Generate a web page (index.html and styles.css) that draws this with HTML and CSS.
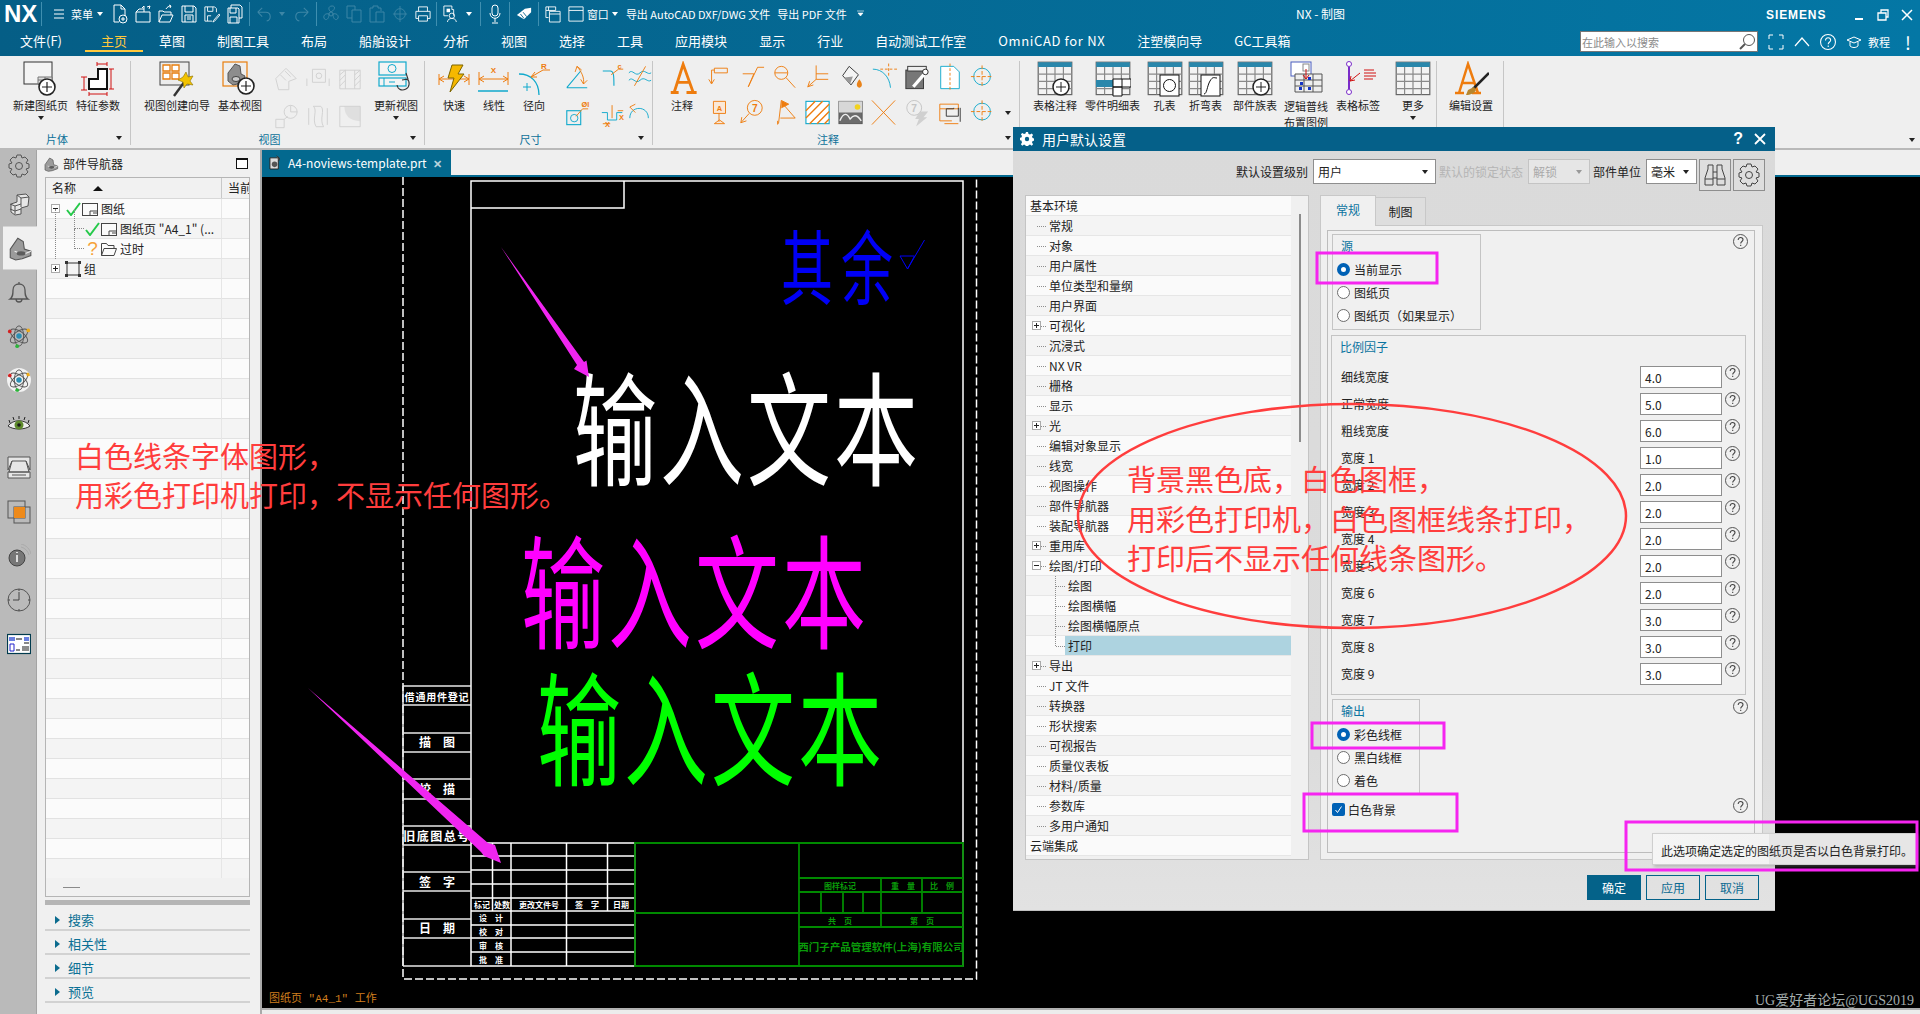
FILE: index.html
```html
<!DOCTYPE html>
<html lang="zh-CN">
<head>
    <meta charset="UTF-8">
    <title>NX - 制图</title>
    <link rel="stylesheet" href="styles.css">
</head>
<body>

<!-- shared icons -->
<svg class="defs" xmlns="http://www.w3.org/2000/svg">
    <symbol id="q-new" viewBox="0 0 16 20"><path d="M2 1h7l4 4v7M9 1v4h4M7 18H2V1" fill="none" stroke="currentColor"/><circle cx="11" cy="15" r="4" fill="none" stroke="currentColor"/><path d="M9 15h4M11 13v4" stroke="currentColor"/></symbol>
    <symbol id="q-box" viewBox="0 0 16 20"><path d="M1 8h14v10H1zM1 8l3-3h5M9 8V2M9 2l-2 2M12 3l3-1-1 3" fill="none" stroke="currentColor"/></symbol>
    <symbol id="q-open" viewBox="0 0 16 20"><path d="M1 18V7h4l1 1h7v3M1 18l3-7h11l-3 7zM8 5c1-2 3-3 5-3M13 2l-2-1M13 2l-1 2" fill="none" stroke="currentColor"/></symbol>
    <symbol id="q-save" viewBox="0 0 16 20"><path d="M1 2h12l2 2v14H1zM4 2v6h8V2M4 18v-7h8v7M6 13h4M6 15h4" fill="none" stroke="currentColor"/></symbol>
    <symbol id="q-saveas" viewBox="0 0 18 20"><path d="M1 2h11l2 2v4M1 2v16h8M4 2v5h6V2M4 18v-6h4M11 17l6-7 1 1-6 7-2 1z" fill="none" stroke="currentColor"/></symbol>
    <symbol id="q-saveall" viewBox="0 0 16 20"><path d="M4 4V1h9l2 2v11h-3M1 4h10l1 1v14H1zM3 4v5h6V4M3 19v-6h7v6" fill="none" stroke="currentColor"/></symbol>
    <symbol id="q-undo" viewBox="0 0 18 20"><path d="M2 8l5-5M2 8l5 5M2 8h9c4 0 5 3 5 5s-1 4-4 5" fill="none" stroke="currentColor" stroke-width="1.2"/></symbol>
    <symbol id="q-fan" viewBox="0 0 16 20"><circle cx="8" cy="10" r="2" fill="none" stroke="currentColor"/><path d="M8 8c-3-2-3-6 1-6s3 4-1 6zM10 10c3-1 6 1 5 4s-5 2-5-4zM6 10c-3-1-6 1-5 4s5 2 5-4z" fill="none" stroke="currentColor"/></symbol>
    <symbol id="q-copy" viewBox="0 0 16 20"><path d="M1 2h8v4h6v12H6v-4H1zM9 6H6v8" fill="none" stroke="currentColor"/></symbol>
    <symbol id="q-paste" viewBox="0 0 16 20"><path d="M1 4h3V2h5v2h3v3M1 4v14h6M7 8h8v10H7z" fill="none" stroke="currentColor"/></symbol>
    <symbol id="q-snap" viewBox="0 0 18 20"><circle cx="9" cy="10" r="6" fill="none" stroke="currentColor"/><path d="M9 1v18M1 10h16" fill="none" stroke="currentColor"/></symbol>
    <symbol id="q-print" viewBox="0 0 18 20"><path d="M4 7V2h10v5M4 15H1V7h16v8h-3M4 12h10v6H4z" fill="none" stroke="currentColor"/></symbol>
    <symbol id="q-view" viewBox="0 0 18 20"><path d="M1 1h9v4h2v7M1 1v11h5" fill="none" stroke="currentColor"/><path d="M4 4h4v4H4z" fill="currentColor"/><circle cx="10" cy="12" r="3" fill="none" stroke="currentColor"/><path d="M5 19c0-3 3-4 5-4s5 1 5 4" fill="none" stroke="currentColor"/></symbol>
    <symbol id="q-mic" viewBox="0 0 12 20"><rect x="3" y="1" width="6" height="11" rx="3" fill="none" stroke="currentColor"/><path d="M1 9c0 7 10 7 10 0M6 14v4M3 19h6" fill="none" stroke="currentColor"/></symbol>
    <symbol id="q-tag" viewBox="0 0 18 20"><path d="M1 11l9-7 7-1v5l-8 8z" fill="currentColor"/><path d="M5 10l4 5M8 8l4 5" stroke="#05618a"/></symbol>
    <symbol id="q-wins" viewBox="0 0 18 20"><path d="M1 2h11v4H1zM1 6v8h3M5 7h12v12H5zM5 10h12M4 2v4" fill="none" stroke="currentColor"/></symbol>
    <symbol id="q-win" viewBox="0 0 18 20"><path d="M1 2h16v16H1zM1 6h16" fill="none" stroke="currentColor"/></symbol>

    <symbol id="i-newsheet" viewBox="0 0 36 36"><rect x="1" y="1" width="28" height="22" fill="#f4f4f4" stroke="#333"/><path d="M15 16h14v7H15zM15 19h14M22 16v7" fill="#ddd" stroke="#777"/><circle cx="24" cy="26" r="8" fill="#fff" stroke="#222" stroke-width="1.6"/><path d="M19 26h10M24 21v10" stroke="#222" stroke-width="1.2"/></symbol>
    <symbol id="i-param" viewBox="0 0 36 36"><path d="M18 8h9v20H9V18h9z" fill="#fff" stroke="#111" stroke-width="2"/><path d="M17 3h10M17 1v4M27 1v4M4 16v13M1 16h6M1 29h6M9 33h18M9 31v4M27 31v4M31 8v20M29 8h5M29 28h5" stroke="#d01010" fill="none"/></symbol>
    <symbol id="i-wizard" viewBox="0 0 36 36"><rect x="1" y="1" width="29" height="23" fill="#ececec" stroke="#444"/><path d="M4 4h7v6H4zM13 4h7v6h-7zM4 12h7v6H4zM13 12h7v6h-7z" fill="#fff" stroke="#e87d0d" stroke-width="1.3"/><path d="M26 20L15 35" stroke="#333" stroke-width="2.4"/><path d="M27 11l2 5 5-1-3 5 3 4-6-1-3 4-1-6-5-2 5-3z" fill="#f2c200" stroke="#8a7000" stroke-width=".6"/></symbol>
    <symbol id="i-base" viewBox="0 0 36 36"><rect x="1" y="1" width="24" height="24" fill="#eee" stroke="#e87d0d" stroke-width="1.2"/><path d="M6 20l0-8 7-9 5 2 1 8 4 2-3 7-9 2z" fill="#8d8d8d" stroke="#555"/><ellipse cx="14" cy="18" rx="4" ry="2.5" fill="#ccc" stroke="#444"/><circle cx="24" cy="25" r="8" fill="#fff" stroke="#222" stroke-width="1.6"/><path d="M19 25h10M24 20v10" stroke="#222" stroke-width="1.2"/></symbol>
    <symbol id="i-update" viewBox="0 0 36 36"><rect x="1" y="1" width="27" height="13" fill="#f4f4f4" stroke="#10a9cc" stroke-width="1.2"/><ellipse cx="14" cy="7.500" rx="4" ry="4" fill="none" stroke="#10a9cc"/><rect x="1" y="17" width="27" height="8" fill="#f4f4f4" stroke="#10a9cc" stroke-width="1.2"/><path d="M6 17v8M11 21h6" stroke="#10a9cc"/><path d="M29 18c3 2 3 8-1 10s-8 1-9-4M28 12l2 6-6 1" fill="none" stroke="#333" stroke-width="1.1"/></symbol>
    <symbol id="i-quick" viewBox="0 0 36 36"><path d="M3 18h30M3 13v11M33 13v11M3 18l5-3M3 18l5 3M33 18l-5-3M33 18l-5 3" stroke="#ee7c0e" fill="none"/><path d="M16 4h11l-5 9h6L14 31l4-14h-6z" fill="#f5b800" stroke="#7c6400"/></symbol>
    <symbol id="i-linear" viewBox="0 0 36 36"><path d="M3 18h29M3 11v13M32 11v13M3 18l5-3M3 18l5 3M32 18l-5-3M32 18l-5 3" stroke="#ee7c0e" fill="none"/><path d="M2 30h30" stroke="#10a9cc" stroke-width="1.5"/></symbol>
    <symbol id="i-radial" viewBox="0 0 36 36"><path d="M3 13c12 0 20 8 20 21" fill="none" stroke="#10a9cc" stroke-width="1.3"/><path d="M7 26h8M11 22v8" stroke="#10a9cc"/><path d="M15 16l12-7h7M15 16l4-5M15 16l6 0" stroke="#ee7c0e" fill="none"/></symbol>

    <symbol id="s-angle" viewBox="0 0 28 30"><path d="M3 26L18 8M3 26h22" stroke="#10a9cc" fill="none" stroke-width="1.2"/><path d="M14 3c5 6 8 12 7 19M14 3l-2 6M14 3l5 4M21 22l-3-5M21 22l4-4" stroke="#ee7c0e" fill="none"/></symbol>
    <symbol id="s-chamfer" viewBox="0 0 28 30"><path d="M3 8h8c4 0 4 6 4 16" stroke="#10a9cc" fill="none" stroke-width="1.2"/><path d="M12 12l8-6h5" stroke="#ee7c0e" fill="none"/></symbol>
    <symbol id="s-dia" viewBox="0 0 28 30"><rect x="3" y="12" width="15" height="15" fill="none" stroke="#10a9cc" stroke-width="1.2"/><circle cx="11" cy="20" r="4" fill="none" stroke="#10a9cc"/><path d="M13 18L20 10h6" stroke="#ee7c0e" fill="none"/></symbol>
    <symbol id="s-pitch" viewBox="0 0 28 30"><path d="M2 14h6v8h10v-8h6" stroke="#10a9cc" fill="none"/><path d="M13 6v14M3 26h8M19 12h6" stroke="#ee7c0e" fill="none"/></symbol>
    <symbol id="s-wave" viewBox="0 0 28 30"><path d="M2 10c4-5 7 5 12 0s8 3 12 0M2 18c4-5 7 5 12 0s8 3 12 0" stroke="#10a9cc" fill="none"/><path d="M20 3L8 24" stroke="#ee7c0e"/></symbol>
    <symbol id="s-arc" viewBox="0 0 28 30"><path d="M3 20c0-14 20-14 20 0" stroke="#10a9cc" fill="none"/><path d="M3 8l6 6M3 8l6-3" stroke="#ee7c0e" fill="none"/></symbol>

    <symbol id="n-text" viewBox="0 0 32 32"><path d="M6 28h7M20 28h9M9 28l8-25 9 25M11 19h11" fill="none" stroke="#ee7c0e" stroke-width="2.5"/></symbol>
    <symbol id="n-leader" viewBox="0 0 28 30"><path d="M9 5h14v5H9zM9 7H6v14M6 22l-3-5M6 22l3-5" fill="none" stroke="#ee7c0e"/></symbol>
    <symbol id="n-rough" viewBox="0 0 28 30"><path d="M4 11h12l-6 14 10-21h7" fill="none" stroke="#ee7c0e"/></symbol>
    <symbol id="n-search" viewBox="0 0 28 30"><circle cx="10" cy="10" r="7" fill="none" stroke="#ee7c0e"/><path d="M3 10h14M15 15l10 11" stroke="#ee7c0e" fill="none"/></symbol>
    <symbol id="n-datum" viewBox="0 0 28 30"><path d="M12 2v15h13M12 11h13M12 17L3 25M3 25l2-6M3 25l6-2" fill="none" stroke="#ee7c0e"/></symbol>
    <symbol id="n-fill" viewBox="0 0 28 30"><path d="M12 3l10 9-8 11-9-10z" fill="#f4f4f4" stroke="#333"/><path d="M7 15l9-1-3 8z" fill="#999"/><path d="M23 17c-5 6-2 9 0 9s5-3 0-9z" fill="#e9831a"/></symbol>
    <symbol id="n-curve" viewBox="0 0 28 30"><path d="M2 6c10 0 18 8 19 20" fill="none" stroke="#10a9cc"/><path d="M10 6h18M19 0v14" stroke="#ee7c0e" stroke-dasharray="3 2" fill="none"/></symbol>
    <symbol id="n-tool" viewBox="0 0 28 30"><rect x="2" y="7" width="19" height="20" fill="#777" stroke="#333"/><rect x="4" y="3" width="20" height="5" fill="#eee" stroke="#333"/><path d="M10 25l13-15" stroke="#fff" stroke-width="3.500"/><circle cx="23" cy="9" r="3" fill="#fff" stroke="#222"/></symbol>
    <symbol id="n-sheet" viewBox="0 0 28 30"><path d="M4 3h14l6 6v18H4z" fill="#fff" stroke="#10a9cc"/><path d="M14 0v30" stroke="#ee7c0e" stroke-dasharray="3 2"/></symbol>
    <symbol id="n-target" viewBox="0 0 28 30"><circle cx="13" cy="14" r="9" fill="none" stroke="#10a9cc"/><path d="M1 14h24M13 2v24" stroke="#ee7c0e" stroke-dasharray="4 2"/></symbol>
    <symbol id="n-label" viewBox="0 0 28 30"><path d="M8 3h13v13H8zM14 16v9M9 27h11l-5.500-4z" fill="#fbe8d6" stroke="#ee7c0e"/></symbol>
    <symbol id="n-seven" viewBox="0 0 28 30"><circle cx="17" cy="10" r="8" fill="none" stroke="#ee7c0e"/><path d="M11 16L2 26M2 26l1-6M2 26l6-2" stroke="#ee7c0e" fill="none"/></symbol>
    <symbol id="n-flag" viewBox="0 0 28 30"><path d="M7 27l3-25 8 4-8 4M6 28l0-4M12 6l13 15H9" fill="none" stroke="#ee7c0e"/><path d="M10 2l8 4-8 4z" fill="#ee7c0e"/></symbol>
    <symbol id="n-hatch" viewBox="0 0 28 30"><rect x="1" y="3" width="25" height="24" fill="#fff" stroke="#10a9cc" stroke-width="1.2"/><path d="M1 13l10-10M1 21L19 3M5 27L26 6M13 27l13-13M21 27l5-5" stroke="#ee7c0e" stroke-width="1.5"/></symbol>
    <symbol id="n-image" viewBox="0 0 28 30"><rect x="1" y="3" width="25" height="24" fill="#6c6c6c" stroke="#555"/><path d="M1 3h25v12H1z" fill="#d7d7d7"/><circle cx="21" cy="9" r="3" fill="#f2d21e"/><path d="M2 24c4-10 8-8 11-2 3-4 7-6 12 2" fill="none" stroke="#eee" stroke-width="1.5"/></symbol>
    <symbol id="n-cross" viewBox="0 0 28 30"><path d="M1 2l25 26M26 2L1 28" stroke="#ee7c0e" fill="none"/></symbol>
    <symbol id="n-sevenoff" viewBox="0 0 28 30"><circle cx="11" cy="10" r="8" fill="none" stroke="#c4c4c4"/><path d="M17 14h9l-5 6h4L13 30l3-8h-4z" fill="#d0d0d0"/></symbol>
    <symbol id="n-part" viewBox="0 0 28 30"><path d="M3 6h20v5H3zM3 11v13h13" fill="none" stroke="#ee7c0e"/><path d="M10 19v-8h8v-1M10 19h13V10M25 10v15" fill="none" stroke="#333"/><path d="M8 27h15" stroke="#ee7c0e"/></symbol>

    <symbol id="t-grid" viewBox="0 0 30 30"><rect x="1" y="1" width="28" height="27" fill="#f3f3f3" stroke="#666"/><path d="M1 1h28v4H1z" fill="#2a87ab"/><path d="M1 11h28M1 17h28M1 23h28M8 5v23M15 5v23M22 5v23" stroke="#8a8a8a"/></symbol>

    <symbol id="exp-plus" viewBox="0 0 9 9"><rect x=".5" y=".5" width="8" height="8" fill="#fff" stroke="#aaa"/><path d="M2 4.500h5M4.500 2v5" stroke="#222"/></symbol>
    <symbol id="exp-minus" viewBox="0 0 9 9"><rect x=".5" y=".5" width="8" height="8" fill="#fff" stroke="#aaa"/><path d="M2 4.500h5" stroke="#222"/></symbol>
    <symbol id="help" viewBox="0 0 15 15"><circle cx="7.500" cy="7.500" r="7" fill="none" stroke="#555"/><path d="M5.200 6c0-3.400 4.800-3 4.800-.2 0 1.700-2.300 1.700-2.300 3.700M7.700 10.800v1.300" fill="none" stroke="#444" stroke-width="1.100"/></symbol>
    <symbol id="check" viewBox="0 0 15 14"><path d="M1 8l4 5 9-12" fill="none" stroke="#25c94a" stroke-width="2"/></symbol>
    <symbol id="sheet" viewBox="0 0 16 14"><rect x=".5" y="1.500" width="15" height="12" fill="#fafafa" stroke="#444"/><path d="M8 9h7.500M8 9v4.500M11 11h4" stroke="#444" fill="none"/></symbol>
    <symbol id="part" viewBox="0 0 24 24"><path d="M3 21l0-8 7-10 5 3 1 7 6 2 0 4-8 3-6 1z" fill="#9b9b9b" stroke="#555"/><path d="M7 15l8 3 7-3" fill="none" stroke="#eee"/><ellipse cx="13" cy="17" rx="4" ry="2" fill="#5c5c5c"/></symbol>
    <symbol id="atom" viewBox="0 0 26 26"><ellipse cx="13" cy="13" rx="11" ry="5" fill="none" stroke="#555" transform="rotate(35 13 13)"/><ellipse cx="13" cy="13" rx="11" ry="5" fill="none" stroke="#555" transform="rotate(-35 13 13)"/><ellipse cx="13" cy="13" rx="5" ry="11" fill="none" stroke="#555"/><circle cx="13" cy="13" r="3" fill="#2c8fb3"/><circle cx="3" cy="8" r="2" fill="#d32020"/><circle cx="23" cy="7" r="2" fill="#eca91a"/><circle cx="11" cy="24" r="2" fill="#2cb53a"/></symbol>
</svg>

<header class="titlebar">
    <span class="nx-logo">NX</span>
    <span class="qat-div"></span>
    <svg class="q hamburger" viewBox="0 0 10 10"><path d="M0 1h10M0 5h10M0 9h10" stroke="currentColor"/></svg>
    <span class="qat-text menu-word">菜单</span><i class="tri white"></i>
    <svg class="q"><use href="#q-new"/></svg>
    <svg class="q"><use href="#q-box"/></svg>
    <svg class="q"><use href="#q-open"/></svg>
    <svg class="q"><use href="#q-save"/></svg>
    <svg class="q"><use href="#q-saveas"/></svg>
    <svg class="q"><use href="#q-saveall"/></svg>
    <span class="qat-div"></span>
    <svg class="q off"><use href="#q-undo"/></svg><i class="tri dim"></i>
    <svg class="q off flip"><use href="#q-undo"/></svg>
    <span class="qat-div"></span>
    <svg class="q off"><use href="#q-fan"/></svg>
    <svg class="q off"><use href="#q-copy"/></svg>
    <svg class="q off"><use href="#q-paste"/></svg>
    <svg class="q off"><use href="#q-snap"/></svg>
    <svg class="q"><use href="#q-print"/></svg>
    <span class="qat-div"></span>
    <svg class="q"><use href="#q-view"/></svg><i class="tri white"></i>
    <span class="qat-div"></span>
    <svg class="q"><use href="#q-mic"/></svg>
    <span class="qat-div"></span>
    <svg class="q"><use href="#q-tag"/></svg>
    <span class="qat-div"></span>
    <svg class="q"><use href="#q-wins"/></svg>
    <svg class="q last-q"><use href="#q-win"/></svg>
    <span class="qat-text">窗口</span><i class="tri white win-tri"></i>
    <span class="qat-text export">导出 AutoCAD DXF/DWG 文件</span>
    <span class="qat-text export">导出 PDF 文件</span>
    <svg class="tri-more" viewBox="0 0 8 8"><path d="M0 1h7M1 3h5l-2.500 3z" fill="#fff" stroke="#fff" stroke-width=".6"/></svg>

    <span class="window-title">NX - 制图</span>
    <span class="siemens">SIEMENS</span>
    <div class="win-btns">
        <svg viewBox="0 0 12 12"><path d="M2 10h8" stroke="#fff" stroke-width="2"/></svg>
        <svg viewBox="0 0 12 12"><path d="M1 4h8v7H1zM4 4V1h7v7H9" fill="none" stroke="#fff" stroke-width="1.300"/></svg>
        <svg viewBox="0 0 12 12"><path d="M1 1l10 10M11 1L1 11" stroke="#fff" stroke-width="1.500"/></svg>
    </div>
</header>

<nav class="menubar">
    <a class="file-menu">文件(F)</a><a class="active">主页</a><a>草图</a><a>制图工具</a><a>布局</a><a>船舶设计</a><a>分析</a><a>视图</a><a>选择</a><a>工具</a><a>应用模块</a><a>显示</a><a>行业</a><a>自动测试工作室</a><a class="omni">OmniCAD for NX</a><a>注塑模向导</a><a>GC工具箱</a>
    <div class="menu-right">
        <div class="searchbox"><span>在此输入以搜索</span>
            <svg viewBox="0 0 18 18"><circle cx="11" cy="7" r="5.500" fill="#fff" stroke="#555"/><path d="M7 11l-5 5" stroke="#555" stroke-width="2"/></svg>
        </div>
        <svg class="mr-ico" viewBox="0 0 16 16"><path d="M1 5V1h4M11 1h4v4M1 11v4h4M15 11v4h-4" fill="none" stroke="#fff"/></svg>
        <svg class="mr-ico" viewBox="0 0 16 16"><path d="M1 12l7-8 7 8" fill="none" stroke="#fff" stroke-width="1.200"/></svg>
        <svg class="mr-ico" viewBox="0 0 15 15"><circle cx="7.500" cy="7.500" r="7" fill="none" stroke="#fff"/><path d="M5.200 6c0-3.400 4.800-3 4.800-.2 0 1.700-2.300 1.700-2.300 3.700M7.700 10.800v1.300" fill="none" stroke="#fff"/></svg>
        <svg class="mr-ico cap" viewBox="0 0 16 16"><path d="M1 6l7-3 7 3-7 3zM4 8v4c2 2 6 2 8 0V8" fill="none" stroke="#fff"/></svg>
        <span class="tutorial">教程</span>
        <span class="bang">!</span>
    </div>
</nav>

<section class="ribbon">
    <div class="rb-group g-sheet">
        <div class="rb-tools">
            <div class="tool"><svg class="big"><use href="#i-newsheet"/></svg><span>新建图纸页</span><i class="tri"></i></div>
            <div class="tool"><svg class="big"><use href="#i-param"/></svg><span>特征参数</span></div>
        </div>
        <div class="rb-label">片体<i class="tri"></i></div>
    </div>
    <div class="rb-group g-view">
        <div class="rb-tools">
            <div class="tool"><svg class="big"><use href="#i-wizard"/></svg><span>视图创建向导</span></div>
            <div class="tool"><svg class="big"><use href="#i-base"/></svg><span>基本视图</span></div>
            <div class="smalls cols3 grayed">
                <svg viewBox="0 0 28 30"><path d="M3 14L14 3l11 11-8 3v9H6z" fill="none" stroke="currentColor"/><path d="M8 10l6 6M13 6l6 6" stroke="currentColor"/></svg>
                <svg viewBox="0 0 28 30"><path d="M8 4h14v14H8zM2 14v8M26 14v8" fill="none" stroke="currentColor"/><circle cx="15" cy="11" r="3" fill="none" stroke="currentColor"/></svg>
                <svg viewBox="0 0 28 30"><path d="M3 5h22v20H3zM9 5v20M19 5v20" fill="none" stroke="currentColor"/><path d="M3 10l6-5M3 16L9 10M3 22l6-6M19 10l6-5M19 16l6-6M19 22l6-6" stroke="currentColor"/></svg>
                <svg viewBox="0 0 28 30"><circle cx="19" cy="10" r="7" fill="none" stroke="currentColor"/><path d="M3 18h9v9H3zM12 18l4-3M19 3v7h7" fill="none" stroke="currentColor"/></svg>
                <svg viewBox="0 0 28 30"><path d="M4 6v18M24 6v18M9 4c5 4-2 14 3 22M17 4c5 4-2 14 3 22M9 4h8M12 26h8" fill="none" stroke="currentColor"/></svg>
                <svg viewBox="0 0 28 30"><path d="M3 4h22v22H3z" fill="none" stroke="currentColor"/><path d="M8 4c0 10 6 16 17 16V4z" fill="currentColor" opacity=".5"/></svg>
            </div>
            <div class="tool"><svg class="big"><use href="#i-update"/></svg><span>更新视图</span><i class="tri"></i></div>
        </div>
        <div class="rb-label">视图<i class="tri"></i></div>
    </div>
    <div class="rb-group g-dim">
        <div class="rb-tools">
            <div class="tool w40"><svg class="big"><use href="#i-quick"/></svg><span>快速</span></div>
            <div class="tool w40"><svg class="big" viewBox="0 0 36 36"><use href="#i-linear"/><text x="17.500" y="12" class="ic-lt">X</text></svg><span>线性</span></div>
            <div class="tool w40"><svg class="big" viewBox="0 0 36 36"><use href="#i-radial"/><text x="28" y="8" class="ic-lt">R</text></svg><span>径向</span></div>
            <div class="smalls dim-small">
                <svg><use href="#s-angle"/></svg>
                <svg viewBox="0 0 28 30"><use href="#s-chamfer"/><text x="21" y="6" class="ic-lt">c</text></svg>
                <svg><use href="#s-wave"/></svg>
                <svg viewBox="0 0 28 30"><use href="#s-dia"/><text x="23" y="8" class="ic-lt">ØI</text></svg>
                <svg viewBox="0 0 28 30"><use href="#s-pitch"/><text x="23" y="22" class="ic-lt">X</text><text x="8" y="30" class="ic-lt">X</text></svg>
                <svg><use href="#s-arc"/></svg>
            </div>
        </div>
        <div class="rb-label">尺寸<i class="tri"></i></div>
    </div>
    <div class="rb-group g-note">
        <div class="rb-tools">
            <div class="tool w40"><svg class="big"><use href="#n-text"/></svg><span>注释</span></div>
            <div class="smalls note-small">
                <svg><use href="#n-leader"/></svg>
                <svg><use href="#n-rough"/></svg>
                <svg><use href="#n-search"/></svg>
                <svg><use href="#n-datum"/></svg>
                <svg><use href="#n-fill"/></svg>
                <svg><use href="#n-curve"/></svg>
                <svg><use href="#n-tool"/></svg>
                <svg><use href="#n-sheet"/></svg>
                <svg><use href="#n-target"/></svg>
                <svg viewBox="0 0 28 30"><use href="#n-label"/><text x="14.500" y="13" class="ic-lt">A</text></svg>
                <svg viewBox="0 0 28 30"><use href="#n-seven"/><text x="17" y="14" class="ic-lt big-n">7</text></svg>
                <svg><use href="#n-flag"/></svg>
                <svg><use href="#n-hatch"/></svg>
                <svg><use href="#n-image"/></svg>
                <svg><use href="#n-cross"/></svg>
                <svg viewBox="0 0 28 30"><use href="#n-sevenoff"/><text x="11" y="14" class="ic-lt big-n off">7</text></svg>
                <svg><use href="#n-part"/></svg>
                <svg><use href="#n-target"/></svg>
            </div>
            <i class="tri note-tri"></i>
        </div>
        <div class="rb-label">注释<i class="tri"></i></div>
    </div>
    <div class="rb-group g-table">
        <div class="rb-tools">
            <div class="tool"><svg class="big"><use href="#t-grid"/><circle cx="24" cy="26" r="8" fill="#fff" stroke="#222" stroke-width="1.500"/><path d="M19 26h10M24 21v10" stroke="#222"/></svg><span>表格注释</span></div>
            <div class="tool"><svg class="big"><use href="#t-grid"/><path d="M1 19h26v7H1z" fill="#2a87ab"/><path d="M18 18h18v8H18zM18 26h9v9h-9zM27 18v8" fill="#fff" stroke="#111"/></svg><span>零件明细表</span></div>
            <div class="tool w33"><svg class="big"><use href="#t-grid"/><rect x="13" y="14" width="19" height="21" fill="#fff" stroke="#111"/><circle cx="22.500" cy="24.500" r="6" fill="none" stroke="#111"/></svg><span>孔表</span></div>
            <div class="tool w33"><svg class="big"><use href="#t-grid"/><rect x="13" y="14" width="19" height="21" fill="#fff" stroke="#111"/><path d="M16 33c3 0 3-8 6-13s4-3 7-3" fill="none" stroke="#111"/></svg><span>折弯表</span></div>
            <div class="tool w50"><svg class="big"><use href="#t-grid"/><circle cx="24" cy="26" r="8" fill="#fff" stroke="#222" stroke-width="1.500"/><path d="M19 26h10M24 21v10" stroke="#222"/></svg><span>部件族表</span></div>
            <div class="tool tight two-line"><svg class="big" viewBox="0 0 36 36"><rect x="3" y="1" width="20" height="14" fill="#fff" stroke="#4b5fc0"/><rect x="15" y="3" width="6" height="7" fill="#fff" stroke="#888"/><path d="M7 13h27v18H7zM7 19h27M7 25h27M16 13v18M25 13v18" fill="#eee" stroke="#555"/><path d="M12 21h3v3h-3zM20 16h3v3h-3zM20 26h3v3h-3zM11 26h3v3h-3z" fill="#1433c4"/><path d="M18 8v10M15 14l3 4 3-4" stroke="#d01010" fill="none"/></svg><span>逻辑普线<br>布置图例</span></div>
            <div class="tool"><svg class="big" viewBox="0 0 36 36"><circle cx="9" cy="3" r="2.500" fill="#fff" stroke="#7a2bc9"/><circle cx="9" cy="31" r="2.500" fill="#fff" stroke="#7a2bc9"/><path d="M9 6v22" stroke="#7a2bc9" stroke-width="2"/><path d="M24 9h10M24 12h12M24 15h12M24 18h9M10 20l10-8M10 20l1-5M10 20l5-1" stroke="#d01010" fill="none"/></svg><span>表格标签</span></div>
            <div class="tool w50"><svg class="big"><use href="#t-grid"/></svg><span>更多</span><i class="tri"></i></div>
        </div>
    </div>
    <div class="rb-group g-edit">
        <div class="rb-tools">
            <div class="tool"><svg class="big" viewBox="0 0 36 36"><path d="M2 32h9M19 32h9M6 32l9-29 10 29M9 22h13" fill="none" stroke="#ee7c0e" stroke-width="2.500"/><path d="M36 12L20 28" stroke="#222" stroke-width="2.500"/><path d="M21 26l-6 3-2 5c4 0 9-2 10-5z" fill="#b7862d"/></svg><span>编辑设置</span></div>
        </div>
    </div>
    <i class="tri ribbon-end"></i>
</section>

<main class="workspace">
    <aside class="rail">
        <div class="rail-item first"><svg viewBox="0 0 24 24"><path d="M10 1h4l1 3 3-1 3 3-2 3 3 1v4l-3 1 2 3-3 3-3-1-1 3h-4l-1-3-3 1-3-3 2-3-3-1v-4l3-1-2-3 3-3 3 1z" fill="none" stroke="#555"/><circle cx="12" cy="12" r="3.500" fill="none" stroke="#555"/></svg></div>
        <div class="rail-item"><svg viewBox="0 0 24 24"><path d="M10 3l9-1 3 3-1 9-7 2v6l-6 1-4-3v-8l6-2z" fill="#e6e6e6" stroke="#555"/><path d="M3 12l5 2 6-2M8 14v8M10 3l4 3 8-1M14 6v9M3 17l5 2 6-2" fill="none" stroke="#555"/></svg></div>
        <div class="rail-item active"><svg><use href="#part"/></svg></div>
        <div class="rail-item"><svg viewBox="0 0 24 24"><path d="M3 19c3-2 3-5 3-9 0-4 3-6 6-6s6 2 6 6c0 4 0 7 3 9zM12 4V2M9 19c0 4 6 4 6 0" fill="none" stroke="#555" stroke-width="1.300"/></svg></div>
        <div class="rail-item"><svg><use href="#atom"/></svg></div>
        <div class="rail-item halo"><svg><use href="#atom"/></svg></div>
        <div class="rail-item"><svg viewBox="0 0 24 24"><path d="M1 14c5-7 17-7 22 0-5 4-17 4-22 0z" fill="#eee" stroke="#333"/><circle cx="12" cy="13" r="4.500" fill="#5e8a2c"/><circle cx="12" cy="13" r="1.800" fill="#1a1a1a"/><path d="M3 11l-1-3M7 8L6 5M12 7V4M17 8l1-3M21 11l1-3" stroke="#222"/></svg></div>
        <div class="rail-item"><svg viewBox="0 0 24 24"><path d="M1 1h22v13l-4-9H5L1 14zM5 5l-3 11h20L19 5M1 16h22v6H1zM5 19h14" fill="#e6e6e6" stroke="#555"/></svg></div>
        <div class="rail-item"><svg viewBox="0 0 24 24"><rect x="1" y="1" width="17" height="17" fill="none" stroke="#555"/><rect x="7" y="7" width="16" height="16" fill="none" stroke="#555"/><rect x="7" y="7" width="11" height="11" fill="#ee8a1a"/></svg></div>
        <div class="rail-item"><svg viewBox="0 0 24 24"><circle cx="10" cy="14" r="8" fill="#777" stroke="#444"/><path d="M10 11v7M10 8v1" stroke="#fff" stroke-width="1.500"/><path d="M14 3c4 1 7 4 8 8M14 0c5 1 9 5 10 10" fill="none" stroke="#aaa"/></svg></div>
        <div class="rail-item"><svg viewBox="0 0 24 24"><circle cx="12" cy="12" r="11" fill="none" stroke="#555"/><path d="M12 4v8H6M12 1v2M12 21v2M1 12h2M21 12h2" fill="none" stroke="#444"/></svg></div>
        <div class="rail-item"><svg viewBox="0 0 24 24"><rect x=".5" y="2.500" width="23" height="19" fill="#fff" stroke="#003a4d" stroke-width="1.200"/><path d="M2 5h6v4H2zM17 5h5v4h-5z" fill="#6a7fe0"/><path d="M9 7h6M17 11h5" stroke="#111"/><path d="M3 12h4v7H3z" stroke="#2222cc" fill="#fff"/><rect x="15" y="14" width="7" height="5" fill="#8c8c8c"/><path d="M9 18h4" stroke="#111"/></svg></div>
    </aside>

    <aside class="nav-panel">
        <div class="nav-head">
            <svg class="nav-part"><use href="#part"/></svg>
            <span>部件导航器</span>
            <i class="nav-max"></i>
        </div>
        <div class="nav-table">
            <div class="nav-colhead"><span class="col-name">名称<i class="sort-up"></i></span><span class="col-cur">当前</span></div>
            <div class="nav-row lit">
                <svg class="exp first-exp"><use href="#exp-minus"/></svg><svg class="ok"><use href="#check"/></svg><svg class="sht"><use href="#sheet"/></svg><span class="nm">图纸</span>
            </div>
            <div class="nav-row sub">
                <svg class="ok"><use href="#check"/></svg><svg class="sht"><use href="#sheet"/></svg><span class="nm">图纸页 "A4_1" (...</span>
            </div>
            <div class="nav-row sub lit last">
                <span class="q-mark">?</span><svg class="sht" viewBox="0 0 16 14"><path d="M.5 13.500V1.500h5l1.500 2h6v3M.5 13.500l2.500-7h12.500l-2.500 7z" fill="none" stroke="#444"/></svg><span class="nm">过时</span>
            </div>
            <div class="nav-row">
                <svg class="exp first-exp"><use href="#exp-plus"/></svg><svg class="group-ico" viewBox="0 0 16 16"><path d="M2 2h12v12H2z" fill="none" stroke="#333"/><path d="M0 0h3v3H0zM13 0h3v3h-3zM0 13h3v3H0zM13 13h3v3h-3z" fill="#333"/></svg><span class="nm">组</span>
            </div>
            <div class="nav-fill"></div>
            <div class="nav-foot"><i></i></div>
        </div>
        <div class="nav-split"></div>
        <div class="nav-section"><i></i>搜索</div>
        <div class="nav-section"><i></i>相关性</div>
        <div class="nav-section"><i></i>细节</div>
        <div class="nav-section"><i></i>预览</div>
    </aside>

    <section class="canvas">
        <div class="doc-tabs">
            <div class="doc-tab">
                <svg viewBox="0 0 14 16"><path d="M1 3h9v12H1zM8 1l3 2v3" fill="#ddd" stroke="#222"/><circle cx="6" cy="10" r="3" fill="#555"/></svg>
                <span>A4-noviews-template.prt</span><b>✕</b>
            </div>
        </div>
        <svg class="drawing" viewBox="262 177 1658 831">
            <!-- sheet frame -->
            <path class="dash" d="M403 177V979H976.500V177"/>
            <path class="frame" d="M471 181H963V966H471ZM471 208H624V181"/>
            <!-- left strip -->
            <path class="frame thin" d="M403 686H471M403 705H471M403 733H471M403 752H471M403 779H471M403 799H471M403 826H471M403 845H471M403 872H471M403 891H471M403 919H471M403 938H471M403 966H471M403 686V966"/>
            <text class="cad-t s11" x="437" y="701">借通用件登记</text>
            <text class="cad-t s12" x="437" y="747">描　图</text>
            <text class="cad-t s12" x="437" y="794">校　描</text>
            <text class="cad-t s12 wide" x="437" y="841">旧底图总号</text>
            <text class="cad-t s12" x="437" y="887">签　字</text>
            <text class="cad-t s12" x="437" y="933">日　期</text>
            <!-- revision table -->
            <path class="frame" d="M471 843H635M471 856H635M471 870H635M471 884H635M471 898H635M471 911H635M471 925H635M471 938H635M471 952H635M492.500 843V911M511 843V966M566.500 843V966M607.500 843V911M635 843V966"/>
            <text class="cad-t s8" x="482" y="908">标记</text>
            <text class="cad-t s8" x="502" y="908">处数</text>
            <text class="cad-t s8" x="539" y="908">更改文件号</text>
            <text class="cad-t s8" x="587" y="908">签　字</text>
            <text class="cad-t s8" x="621" y="908">日期</text>
            <text class="cad-t s8" x="491" y="921">设　计</text>
            <text class="cad-t s8" x="491" y="935">校　对</text>
            <text class="cad-t s8" x="491" y="949">审　核</text>
            <text class="cad-t s8" x="491" y="963">批　准</text>
            <!-- title block -->
            <path class="title-block" d="M635 843H963V966H635ZM799 843V966M635 913H963M799 878H963M799 892H963M799 927H963M881 878V927M922 878V913M821 892V913M843 892V913M863 892V913"/>
            <text class="cad-g s8" x="840" y="889">图样标记</text>
            <text class="cad-g s8" x="903" y="889">重　量</text>
            <text class="cad-g s8" x="942" y="889">比　例</text>
            <text class="cad-g s8" x="840" y="924">共　页</text>
            <text class="cad-g s8" x="922" y="924">第　页</text>
            <text class="cad-g co" x="881" y="951">西门子产品管理软件(上海)有限公司</text>
            <!-- big notes -->
            <text class="huge white" transform="translate(573 476) scale(1 1.460)">输入文本</text>
            <text class="huge magenta" transform="translate(521 639) scale(1 1.460)">输入文本</text>
            <text class="huge lime" transform="translate(537 776) scale(1 1.460)">输入文本</text>
            <text class="rest" transform="translate(781 298) scale(1 1.550)">其余</text>
            <path class="rough" d="M900 256H914.500L907.500 269L900 256M907.500 269L924.500 240"/>
            <text class="status" x="269" y="1002">图纸页 "A4_1" 工作</text>
            <text class="mark" x="1755" y="1005">UG爱好者论坛@UGS2019</text>
        </svg>
        <div class="canvas-foot"></div>
    </section>
</main>

<div class="dialog">
    <div class="dlg-title">
        <svg class="dlg-gear" viewBox="0 0 14 14"><path d="M6 0h2l.5 2 1.500.6 1.700-1.100 1.400 1.400-1.100 1.700.6 1.500 2 .5v2l-2 .5-.6 1.500 1.100 1.700-1.400 1.400-1.700-1.100-1.500.6-.5 2H6l-.5-2-1.500-.6-1.700 1.100-1.400-1.400 1.100-1.700L1.400 8.500l-2-.5V6l2-.5.6-1.500-1.100-1.700L2.300.9 4 2l1.500-.6z" fill="#fff"/><circle cx="7" cy="7" r="2.200" fill="#056089"/></svg>
        <span class="dlg-name">用户默认设置</span>
        <b class="dlg-q">?</b>
        <svg class="dlg-x" viewBox="0 0 12 12"><path d="M1 1l10 10M11 1L1 11" stroke="#fff" stroke-width="1.800"/></svg>
    </div>
    <div class="dlg-tools">
        <label>默认设置级别</label>
        <div class="combo c-level">用户<i class="tri"></i></div>
        <label class="off">默认的锁定状态</label>
        <div class="combo c-lock off">解锁<i class="tri"></i></div>
        <label>部件单位</label>
        <div class="combo c-unit">毫米<i class="tri"></i></div>
        <div class="tool-btn"><svg viewBox="0 0 24 24"><path d="M2 22v-7l3-9V2h5v20zM22 22v-7l-3-9V2h-5v20zM10 9h4M10 15h4M2 16h8M14 16h8" fill="none" stroke="#444"/></svg></div>
        <div class="tool-btn"><svg viewBox="0 0 24 24"><path d="M10 1h4l1 3 3-1 3 3-2 3 3 1v4l-3 1 2 3-3 3-3-1-1 3h-4l-1-3-3 1-3-3 2-3-3-1v-4l3-1-2-3 3-3 3 1z" fill="none" stroke="#444"/><circle cx="12" cy="12" r="3.500" fill="none" stroke="#444"/></svg></div>
    </div>
    <div class="dlg-body">
        <div class="tree">
            <div class="tree-rows">
                <div class="t-row">基本环境</div>
                <div class="t-row alt l1">常规</div>
                <div class="t-row l1">对象</div>
                <div class="t-row alt l1">用户属性</div>
                <div class="t-row l1">单位类型和量纲</div>
                <div class="t-row alt l1">用户界面</div>
                <div class="t-row l1"><svg class="t-exp"><use href="#exp-plus"/></svg>可视化</div>
                <div class="t-row alt l1">沉浸式</div>
                <div class="t-row l1">NX VR</div>
                <div class="t-row alt l1">栅格</div>
                <div class="t-row l1">显示</div>
                <div class="t-row alt l1"><svg class="t-exp"><use href="#exp-plus"/></svg>光</div>
                <div class="t-row l1">编辑对象显示</div>
                <div class="t-row alt l1">线宽</div>
                <div class="t-row l1">视图操作</div>
                <div class="t-row alt l1">部件导航器</div>
                <div class="t-row l1">装配导航器</div>
                <div class="t-row alt l1"><svg class="t-exp"><use href="#exp-plus"/></svg>重用库</div>
                <div class="t-row l1"><svg class="t-exp"><use href="#exp-minus"/></svg>绘图/打印</div>
                <div class="t-row alt l2">绘图</div>
                <div class="t-row l2">绘图横幅</div>
                <div class="t-row alt l2">绘图横幅原点</div>
                <div class="t-row l2 end selected"><span>打印</span></div>
                <div class="t-row alt l1"><svg class="t-exp"><use href="#exp-plus"/></svg>导出</div>
                <div class="t-row l1">JT 文件</div>
                <div class="t-row alt l1">转换器</div>
                <div class="t-row l1">形状搜索</div>
                <div class="t-row alt l1">可视报告</div>
                <div class="t-row l1">质量仪表板</div>
                <div class="t-row alt l1">材料/质量</div>
                <div class="t-row l1">参数库</div>
                <div class="t-row alt l1">多用户通知</div>
                <div class="t-row">云端集成</div>
            </div>
            <div class="tree-scroll"><i></i></div>
        </div>
        <div class="settings">
            <div class="set-tabs"><span class="set-tab on">常规</span><span class="set-tab">制图</span></div>
            <div class="set-panel">
                <div class="set-inner">
                    <div class="set-line">
                        <fieldset class="group g-source">
                            <div class="group-label">源</div>
                            <div class="radio on"><i></i>当前显示</div>
                            <div class="radio"><i></i>图纸页</div>
                            <div class="radio"><i></i>图纸页（如果显示）</div>
                        </fieldset>
                        <svg class="help top-help"><use href="#help"/></svg>
                    </div>
                    <div class="group g-scale">
                        <div class="group-label">比例因子</div>
                        <div class="s-row"><span>细线宽度</span><div class="num">4.0</div><svg class="help"><use href="#help"/></svg></div>
                        <div class="s-row"><span>正常宽度</span><div class="num">5.0</div><svg class="help"><use href="#help"/></svg></div>
                        <div class="s-row"><span>粗线宽度</span><div class="num">6.0</div><svg class="help"><use href="#help"/></svg></div>
                        <div class="s-row"><span>宽度 1</span><div class="num">1.0</div><svg class="help"><use href="#help"/></svg></div>
                        <div class="s-row"><span>宽度 2</span><div class="num">2.0</div><svg class="help"><use href="#help"/></svg></div>
                        <div class="s-row"><span>宽度 3</span><div class="num">2.0</div><svg class="help"><use href="#help"/></svg></div>
                        <div class="s-row"><span>宽度 4</span><div class="num">2.0</div><svg class="help"><use href="#help"/></svg></div>
                        <div class="s-row"><span>宽度 5</span><div class="num">2.0</div><svg class="help"><use href="#help"/></svg></div>
                        <div class="s-row"><span>宽度 6</span><div class="num">2.0</div><svg class="help"><use href="#help"/></svg></div>
                        <div class="s-row"><span>宽度 7</span><div class="num">3.0</div><svg class="help"><use href="#help"/></svg></div>
                        <div class="s-row"><span>宽度 8</span><div class="num">3.0</div><svg class="help"><use href="#help"/></svg></div>
                        <div class="s-row"><span>宽度 9</span><div class="num">3.0</div><svg class="help"><use href="#help"/></svg></div>
                    </div>
                    <div class="set-line out-line">
                        <fieldset class="group g-output">
                            <div class="group-label">输出</div>
                            <div class="radio on"><i></i>彩色线框</div>
                            <div class="radio"><i></i>黑白线框</div>
                            <div class="radio"><i></i>着色</div>
                        </fieldset>
                        <svg class="help top-help"><use href="#help"/></svg>
                    </div>
                    <div class="set-line check-line">
                        <div class="checkbox"><svg viewBox="0 0 13 13"><rect width="13" height="13" rx="2" fill="#0061b5"/><path d="M3.500 7l2 2.500 4-6" fill="none" stroke="#fff"/></svg>白色背景</div>
                        <svg class="help"><use href="#help"/></svg>
                    </div>
                </div>
            </div>
        </div>
    </div>
    <div class="dlg-foot">
        <span class="btn primary">确定</span>
        <span class="btn">应用</span>
        <span class="btn">取消</span>
    </div>
</div>

<div class="tooltip">此选项确定选定的图纸页是否以白色背景打印。</div>

<!-- hand drawn markup on top of the screenshot -->
<div class="note note-left">白色线条字体图形，<br>用彩色打印机打印，不显示任何图形。</div>
<div class="note note-right">背景黑色底，白色图框，<br>用彩色打印机，白色图框线条打印，<br>打印后不显示任何线条图形。</div>
<svg class="markup" viewBox="0 0 1920 1014">
    <ellipse class="ring" cx="1352" cy="516" rx="274" ry="112"/>
    <rect class="box" x="1317" y="253" width="120" height="30"/>
    <rect class="box" x="1312" y="723" width="132" height="25"/>
    <rect class="box" x="1304" y="794" width="153" height="37"/>
    <rect class="box" x="1626" y="822" width="291" height="48"/>
    <path class="arrow" d="M501 247L584 362 586.500 360.500 589 377 574 369 577 365Z"/>
    <path class="arrow" d="M308 688L488 843 495 845 501 863 484 856 481 852Z"/>
</svg>

</body>
</html>
```

FILE: styles.css
```css
html, body {
    margin: 0;
    height: 100%;
    overflow: hidden;
}
body {
    display: flex;
    flex-direction: column;
    width: 1920px;
    height: 1014px;
    position: relative;
    background-color: #000;
    color: #222;
    font-family: "Noto Sans CJK SC", "Liberation Sans", sans-serif;
    font-size: 12px;
}
.defs {
    position: absolute;
    width: 0;
    height: 0;
}
i {
    font-style: normal;
}
svg {
    display: block;
    flex: none;
}
.ic-lt {
    font-family: "Liberation Sans", sans-serif;
    font-size: 8px;
    font-weight: 700;
    fill: #ee7c0e;
    text-anchor: middle;
}
.ic-lt.big-n { font-size: 11px; }
.ic-lt.off { fill: #c4c4c4; }

/* small down triangle used all over */
.tri {
    display: block;
    flex: none;
    width: 0;
    height: 0;
    border-left: 3.5px solid transparent;
    border-right: 3.5px solid transparent;
    border-top: 4px solid #222;
}
.tri.white { border-top-color: #fff; }
.tri.dim { border-top-color: #3d86a6; }

/* title bar */
.titlebar {
    display: flex;
    align-items: center;
    height: 28px;
    flex: none;
    position: relative;
    color: #fff;
    background: linear-gradient(90deg, #055e86, #0477a5);
}
.nx-logo {
    width: 36px;
    margin-left: 4px;
    font-family: "Liberation Sans", sans-serif;
    font-size: 24px;
    font-weight: 700;
    line-height: 28px;
}
.qat-div {
    width: 1px;
    height: 24px;
    margin: 0 6px 0 -1.2px;
    background-color: #3f8fb0;
}
.titlebar .nx-logo + .qat-div { margin: 0 12px 0 1px; }
.q {
    width: 16px;
    height: 20px;
    margin-right: 7px;
    color: #fff;
}
.q.off { color: #3d86a6; }
.q.flip { transform: scaleX(-1); }
.q.last-q { margin-right: 3px; }
.hamburger { width: 10px; height: 10px; margin-right: 7px; }
.qat-text { font-size: 11px; white-space: nowrap; }
.menu-word { margin-right: 4px; }
.tri.white, .tri.dim { margin-right: 9px; }
.tri.win-tri { margin: 0 8px 0 3px; }
.export { margin-right: 7px; }
.tri-more { width: 8px; height: 8px; margin-left: 3px; }
.window-title {
    position: absolute;
    left: 1296px;
    top: 5px;
    font-size: 12px;
    line-height: 18px;
}
.siemens {
    position: absolute;
    left: 1766px;
    top: 7px;
    font-family: "Liberation Sans", sans-serif;
    font-size: 12px;
    font-weight: 700;
    line-height: 16px;
    letter-spacing: .9px;
}
.win-btns {
    position: absolute;
    right: 7px;
    top: 9px;
    display: flex;
    gap: 12px;
}
.win-btns svg { width: 12px; height: 12px; }

/* menu bar */
.menubar {
    display: flex;
    align-items: flex-start;
    flex: none;
    height: 28px;
    padding-left: 4px;
    color: #fff;
    background: linear-gradient(90deg, #055e86, #0477a5);
    font-size: 13px;
}
.menubar a {
    padding: 2px 16px 0;
    height: 24px;
    line-height: 22px;
    white-space: nowrap;
    box-sizing: border-box;
    border-bottom: 2px solid transparent;
}
.menubar a.active {
    color: #ffc83d;
    border-bottom-color: #ffc83d;
}
.menubar a.file-menu { padding-right: 23px; }
.menubar a.omni { letter-spacing: .65px; }
.menu-right {
    display: flex;
    align-items: center;
    margin-left: auto;
    height: 26px;
}
.searchbox {
    display: flex;
    align-items: center;
    justify-content: space-between;
    width: 178px;
    height: 21px;
    padding: 0 1px;
    box-sizing: border-box;
    background-color: #fff;
    border: 1px solid #777;
    color: #8b8b8b;
    font-size: 11px;
    margin-top: 1px;
}
.searchbox svg { width: 18px; height: 18px; }
.mr-ico { width: 16px; height: 16px; margin-left: 10px; margin-top: 2px; }
.cap { margin-left: 10px; }
.tutorial { color: #fff; font-size: 11px; margin-left: 6px; margin-top: 2px; }
.bang { font-size: 18px; margin-left: 15px; width: 15px; line-height: 20px; margin-top: 2px; }

/* ribbon */
.ribbon {
    display: flex;
    flex: none;
    height: 94px;
    box-sizing: border-box;
    padding-top: 5px;
    background-color: #efefef;
    border-bottom: 2px solid #b9b9b9;
    position: relative;
}
.rb-group {
    display: flex;
    flex-direction: column;
    flex: none;
    box-sizing: border-box;
    height: 84px;
    border-right: 1px solid #c6c6c6;
}
.g-sheet { width: 131px; }
.g-view { width: 294px; }
.g-dim { width: 228px; }
.g-note { width: 367px; }
.g-table { width: 417px; }
.g-edit { width: 67px; }
.rb-tools {
    display: flex;
    flex: 1;
    min-height: 0;
    gap: 8px;
    padding-left: 13px;
}
.g-dim .rb-tools, .g-note .rb-tools { gap: 0; padding-left: 9px; }
.g-edit .rb-tools { padding-left: 12px; }
.tool {
    display: flex;
    flex-direction: column;
    align-items: center;
    flex: none;
    font-size: 11px;
    line-height: 15px;
    color: #222;
    text-align: center;
}
.tool .tri { margin-top: 3px; }
.tool .big { width: 36px; height: 36px; margin-bottom: 1px; }
.w33 { width: 33px; }
.w40 { width: 40px; }
.w50 { width: 50px; }
.tight { margin-left: -4px; width: 44px; }
.two-line span { line-height: 16px; }
.smalls {
    display: grid;
    align-content: start;
    justify-items: center;
}
.smalls svg { width: 26px; height: 29px; }
.cols3 {
    grid-template-columns: repeat(3, 32px);
    grid-auto-rows: 37px;
    color: #cfcfcf;
    padding-top: 4px;
}
.dim-small {
    grid-template-columns: 36px 36px 18px;
    grid-auto-rows: 36px;
    margin-left: 5px;
    padding-top: 2px;
}
.note-small {
    grid-template-columns: repeat(9, 33px);
    grid-auto-rows: 35px;
    padding-top: 2px;
}
.note-tri { align-self: flex-start; margin: 50px 0 0 6px; }
.rb-label {
    position: relative;
    height: 16px;
    flex: none;
    margin-bottom: -2px;
    padding-right: 16px;
    color: #0d7199;
    text-align: center;
    font-size: 11px;
    line-height: 16px;
}
.rb-label .tri {
    position: absolute;
    right: 8px;
    top: 5px;
}
.ribbon-end {
    position: absolute;
    right: 5px;
    top: 82px;
}

/* workspace */
.workspace {
    display: flex;
    flex: 1;
    min-height: 0;
}
.rail {
    flex: none;
    width: 37px;
    box-sizing: border-box;
    background-color: #bababa;
    border-right: 1px solid #a4a4a4;
}
.rail-item {
    display: flex;
    align-items: center;
    justify-content: center;
    height: 44px;
    padding-left: 2px;
}
.rail-item.first { height: 32px; }
.rail-item svg { width: 24px; height: 24px; }
.rail-item.active {
    margin-left: 3px;
    margin-right: -1px;
    background-color: #f0f0f0;
    border-top: 1px solid #d4d4d4;
    border-bottom: 1px solid #d4d4d4;
    box-sizing: border-box;
    padding-left: 0;
}
.rail-item.active svg { width: 26px; height: 26px; }
.rail-item.halo svg {
    background-color: #f2f2f2;
    border-radius: 50%;
}

.nav-panel {
    flex: none;
    width: 225px;
    box-sizing: border-box;
    padding: 0 10px 0 8px;
    background-color: #f0f0f0;
    border-right: 2px solid #a9a9a9;
}
.nav-head {
    display: flex;
    align-items: center;
    height: 27px;
}
.nav-part { width: 16px; height: 16px; margin: 0 4px 0 -2px; }
.nav-max {
    width: 10px;
    height: 8px;
    margin-left: auto;
    margin-right: 2px;
    border: 1px solid #111;
    border-top-width: 2px;
    background-color: #fff;
}
.nav-table {
    display: flex;
    flex-direction: column;
    height: 720px;
    box-sizing: border-box;
    background-color: #f1f1f1;
    border: 1px solid #b5b5b5;
}
.nav-colhead {
    display: flex;
    flex: none;
    height: 20px;
    border-bottom: 1px solid #d8d8d8;
    line-height: 20px;
}
.col-name {
    display: flex;
    align-items: center;
    flex: 1;
    padding-left: 6px;
    gap: 17px;
}
.col-cur {
    width: 28px;
    padding-left: 6px;
    box-sizing: border-box;
    overflow: hidden;
    white-space: nowrap;
    border-left: 1px solid #c8c8c8;
}
.sort-up {
    width: 0;
    height: 0;
    border-left: 5px solid transparent;
    border-right: 5px solid transparent;
    border-bottom: 5px solid #111;
}
.nav-row {
    display: flex;
    align-items: center;
    flex: none;
    position: relative;
    height: 20px;
    box-sizing: border-box;
    background-color: #f4f4f4;
    border-bottom: 1px solid #e4e4e4;
    background-image: linear-gradient(#e6e6e6, #e6e6e6);
    background-size: 1px 100%;
    background-position: 175px 0;
    background-repeat: no-repeat;
}
.nav-row.lit { background-color: #fbfbfb; }
.exp { width: 9px; height: 9px; }
.first-exp { margin-left: 5px; }
.ok { width: 15px; height: 14px; margin-left: 6px; }
.sht { width: 16px; height: 14px; margin-left: 1px; }
.nm { margin-left: 3px; white-space: nowrap; }
.group-ico { width: 16px; height: 16px; margin-left: 5px; }
.nav-row.sub { padding-left: 39px; }
.nav-row.sub .ok { margin-left: 0; }
.q-mark {
    width: 15px;
    color: #f6a33a;
    font-family: "Liberation Sans", sans-serif;
    font-size: 19px;
    font-weight: 400;
    line-height: 20px;
    text-align: center;
}
/* dotted tree connectors */
.nav-row.sub::before {
    content: "";
    position: absolute;
    left: 9px;
    top: -10px;
    height: 40px;
    border-left: 1px dotted #888;
}
.nav-row.sub::after {
    content: "";
    position: absolute;
    left: 28px;
    top: -10px;
    width: 9px;
    height: 19px;
    border-left: 1px dotted #888;
    border-bottom: 1px dotted #888;
}
.nav-fill {
    flex: 1;
    background-color: #fbfbfb;
    background-image:
        linear-gradient(#e6e6e6, #e6e6e6),
        repeating-linear-gradient(#fbfbfb 0 19px, #e2e2e2 19px 20px, #f4f4f4 20px 39px, #e2e2e2 39px 40px);
    background-size: 1px 100%, 100% 100%;
    background-position: 175px 0, 0 0;
    background-repeat: no-repeat;
}
.nav-foot {
    flex: none;
    height: 18px;
    display: flex;
    align-items: center;
    background-color: #f1f1f1;
}
.nav-foot i {
    width: 17px;
    height: 1px;
    margin-left: 17px;
    background-color: #8a8a8a;
}
.nav-split {
    height: 5px;
    margin-top: 3px;
    margin-bottom: 2px;
    background-color: #b5b5b5;
}
.nav-section {
    display: flex;
    align-items: center;
    height: 24px;
    box-sizing: border-box;
    padding-top: 3px;
    border-bottom: 2px solid #d2d2d2;
    color: #0b7095;
    font-size: 13px;
}
.nav-section i {
    width: 0;
    height: 0;
    margin: 0 8px 0 10px;
    border-top: 4px solid transparent;
    border-bottom: 4px solid transparent;
    border-left: 5px solid #0b6b8e;
}

.canvas {
    display: flex;
    flex-direction: column;
    flex: 1;
    min-width: 0;
    background-color: #efefef;
}
.doc-tabs {
    flex: none;
    height: 27px;
    box-sizing: border-box;
    border-bottom: 2px solid #03698f;
}
.doc-tab {
    display: flex;
    align-items: center;
    width: 189px;
    height: 25px;
    padding-left: 7px;
    box-sizing: border-box;
    background-color: #03698f;
    color: #fff;
}
.doc-tab svg { width: 13px; height: 15px; margin-right: 6px; }
.doc-tab b {
    margin-left: 6px;
    color: #b9d3dd;
    font-size: 11px;
    font-weight: 700;
}
.drawing {
    flex: 1;
    min-height: 0;
    width: 100%;
    background-color: #000;
}
.canvas-foot {
    flex: none;
    height: 6px;
    box-sizing: border-box;
    background-color: #ececec;
    border-top: 2px solid #b0b0b0;
}

/* the drawing itself */
.dash {
    fill: none;
    stroke: #fff;
    stroke-width: 1.500;
    stroke-dasharray: 8 3;
}
.frame {
    fill: none;
    stroke: #fff;
    stroke-width: 1.500;
}
.frame.thin { stroke: #e8e8e8; }
.title-block {
    fill: none;
    stroke: #008a00;
    stroke-width: 1.800;
}
.cad-t, .cad-g {
    text-anchor: middle;
    font-weight: 700;
}
.cad-t { fill: #fff; }
.cad-g { fill: #0a9a0a; }
.s12 { font-size: 12px; }
.s11 { font-size: 10px; letter-spacing: .8px; }
.s8 { font-size: 8px; }
.wide { letter-spacing: 1.500px; }
.cad-g.co { font-size: 10.500px; }
.huge {
    font-size: 84px;
    letter-spacing: 3px;
}
.white { fill: #fff; }
.magenta { fill: #f0f; }
.lime { fill: #0f0; }
.rest {
    font-size: 52px;
    letter-spacing: 8px;
    fill: #0000f5;
}
.rough {
    fill: none;
    stroke: #0000f5;
}
.status {
    font-family: "Liberation Mono", "Noto Sans CJK SC", monospace;
    font-size: 11px;
    fill: #d07f1e;
}
.mark {
    font-family: "Liberation Serif", "Noto Sans CJK SC", serif;
    font-size: 14px;
    fill: #a3adad;
}

/* dialog */
.dialog {
    position: absolute;
    left: 1013px;
    top: 127px;
    width: 762px;
    height: 784px;
    display: flex;
    flex-direction: column;
    background: linear-gradient(#dadada, #dcdcdc 80%, #e2e2e2);
    box-sizing: border-box;
    border-bottom: 1px solid #c0c0c0;
}
.dlg-title {
    display: flex;
    align-items: center;
    flex: none;
    height: 24px;
    padding: 0 9px 0 7px;
    background-color: #056089;
    color: #fff;
}
.dlg-gear { width: 14px; height: 14px; margin-right: 8px; }
.dlg-name { flex: 1; font-size: 14px; }
.dlg-q { font-family: "Liberation Sans", sans-serif; font-size: 16px; margin-right: 11px; }
.dlg-x { width: 12px; height: 12px; }
.dlg-tools {
    display: flex;
    align-items: flex-start;
    justify-content: flex-end;
    flex: none;
    height: 44px;
    box-sizing: border-box;
    padding: 8px 10px 0 0;
}
.dlg-tools label {
    line-height: 25px;
    color: #222;
    margin: 0 5px 0 3px;
    white-space: nowrap;
}
.dlg-tools label.off { color: #b5b5b5; }
.combo {
    display: flex;
    align-items: center;
    justify-content: space-between;
    flex: none;
    height: 25px;
    box-sizing: border-box;
    padding: 0 7px 0 4px;
    background-color: #fff;
    border: 1px solid #8e8e8e;
    font-size: 12px;
}
.combo.off {
    background-color: #e6e6e6;
    border-color: #c4c4c4;
    color: #aaa;
}
.combo.off .tri { border-top-color: #999; }
.c-level { width: 123px; }
.c-lock { width: 62px; }
.c-unit { width: 51px; }
.tool-btn {
    width: 32px;
    height: 32px;
    box-sizing: border-box;
    padding: 3px;
    margin-left: 2px;
    border: 1px solid #8e8e8e;
    background-color: #dedede;
}
.tool-btn svg { width: 24px; height: 24px; }
.dlg-body {
    display: flex;
    flex: none;
    height: 665px;
    padding-left: 12px;
    gap: 11px;
}
.tree {
    display: flex;
    flex: none;
    width: 284px;
    box-sizing: border-box;
    background-color: #f0f0f0;
    border: 1px solid #c4c4c4;
}
.tree-rows {
    position: relative;
    flex: none;
    width: 265px;
}
.tree-rows::before {
    content: "";
    position: absolute;
    left: 10px;
    top: 20px;
    height: 626px;
    border-left: 1px dotted #8e8e8e;
}
.t-row {
    display: flex;
    align-items: center;
    position: relative;
    height: 20px;
    box-sizing: border-box;
    padding-left: 4px;
    background-color: #fafafa;
    border-bottom: 1px solid #e6e6e6;
    white-space: pre;
}
.t-row.alt { background-color: #f4f4f4; }
.t-row.l1 { padding-left: 23px; }
.t-row.l2 { padding-left: 42px; }
.t-row.l1::after, .t-row.l2::after {
    content: "";
    position: absolute;
    left: 11px;
    top: 10px;
    width: 9px;
    border-top: 1px dotted #8e8e8e;
}
.t-row.l2::after { left: 30px; }
.t-row.l2::before {
    content: "";
    position: absolute;
    left: 29px;
    top: 0;
    bottom: 0;
    border-left: 1px dotted #8e8e8e;
}
.t-row.l2.end::before { bottom: 9px; }
.t-exp {
    position: absolute;
    left: 6px;
    top: 5px;
    width: 9px;
    height: 9px;
    z-index: 1;
}
.t-row.selected { padding: 0 0 0 39px; }
.t-row.selected span {
    flex: 1;
    height: 100%;
    padding-left: 3px;
    line-height: 19px;
    background-color: #add3e0;
}
.tree-scroll {
    flex: 1;
    background-color: #f0f0f0;
}
.tree-scroll i {
    display: block;
    width: 2px;
    height: 228px;
    margin: 18px 0 0 8px;
    background-color: #8c8c8c;
}
.settings {
    display: flex;
    flex-direction: column;
    flex: none;
    width: 443px;
}
.set-tabs {
    display: flex;
    flex: none;
    height: 31px;
    margin-bottom: -1px;
    position: relative;
    z-index: 1;
}
.set-tab {
    width: 50px;
    height: 29px;
    margin-top: 2px;
    box-sizing: border-box;
    text-align: center;
    line-height: 28px;
    background-color: #dedede;
    border: 1px solid #c8c8c8;
    border-left: 0;
}
.set-tab.on {
    width: 56px;
    height: 31px;
    margin-top: 0;
    background-color: #f0f0f0;
    border: 1px solid #c8c8c8;
    border-bottom: 0;
    color: #0c74a0;
}
.set-panel {
    flex: 1;
    box-sizing: border-box;
    padding: 4px 7px 6px 6px;
    background-color: #f0f0f0;
    border: 1px solid #c8c8c8;
}
.set-inner {
    height: 100%;
    box-sizing: border-box;
    padding: 3px 4px;
    border: 1px solid #bdbdbd;
    background-color: #f0f0f0;
}
.set-line {
    display: flex;
    justify-content: space-between;
    align-items: flex-start;
}
.top-help { margin: 0 2px 0 0; }
.help { width: 15px; height: 15px; flex: none; }
.group {
    margin: 0;
    padding: 0;
    box-sizing: border-box;
    border: 1px solid #c4c4c4;
    min-width: 0;
}
.g-source { width: 149px; height: 96px; }
.g-output { width: 88px; height: 94px; border-bottom: 0; }
.group-label {
    height: 16px;
    padding: 3px 0 0 8px;
    line-height: 16px;
    color: #0c74a0;
    margin-bottom: 4px;
}
.radio {
    display: flex;
    align-items: center;
    height: 23px;
    padding-left: 4px;
    white-space: nowrap;
}
.radio i {
    width: 13px;
    height: 13px;
    margin-right: 4px;
    box-sizing: border-box;
    background-color: #fff;
    border: 1px solid #6d6d6d;
    border-radius: 50%;
}
.radio.on i {
    background-color: #fff;
    border: 4px solid #0061b5;
}
.g-scale {
    margin: 5px 4px 0 -1px;
    padding: 0 5px 0 0;
    height: 360px;
}
.g-scale .group-label {
    height: 27px;
    margin: 0;
}
.s-row {
    display: flex;
    align-items: flex-start;
    height: 27px;
}
.s-row span {
    flex: 1;
    padding-left: 9px;
    line-height: 22px;
}
.num {
    width: 82px;
    height: 22px;
    box-sizing: border-box;
    padding-left: 4px;
    margin-right: 3px;
    background-color: #fff;
    border: 1px solid #8e8e8e;
    line-height: 21px;
}
.s-row .help { margin-top: -1px; }
.out-line { margin-top: 4px; }
.check-line { margin-top: 9px; padding-right: 2px; }
.checkbox {
    display: flex;
    align-items: center;
    gap: 3px;
    height: 14px;
}
.checkbox svg { width: 13px; height: 13px; }
.check-line .help { margin-top: -4px; }
.dlg-foot {
    display: flex;
    justify-content: flex-end;
    gap: 5px;
    flex: none;
    padding: 15px 16px 0 0;
}
.btn {
    width: 54px;
    height: 25px;
    box-sizing: border-box;
    text-align: center;
    line-height: 23px;
    color: #0c6a92;
    border: 1px solid #046289;
}
.btn.primary {
    background-color: #046289;
    color: #fff;
}

.tooltip {
    position: absolute;
    left: 1652px;
    top: 833px;
    width: 265px;
    height: 32px;
    box-sizing: border-box;
    padding-left: 8px;
    background: linear-gradient(90deg, #f5f5f5, #f2f2f2 44%, #e6e6e6 44%);
    border: 1px solid #cfcfcf;
    box-shadow: 2px 2px 3px rgba(120, 120, 120, .4);
    color: #222;
    line-height: 33px;
    white-space: nowrap;
}

/* markup overlay */
.note {
    position: absolute;
    color: #ff3d3d;
    font-size: 29px;
    z-index: 5;
    white-space: nowrap;
    text-spacing-trim: space-all;
    font-kerning: none;
}
.note-left {
    left: 75px;
    top: 436px;
    line-height: 39px;
}
.note-right {
    left: 1127px;
    top: 459px;
    line-height: 39.500px;
}
.markup {
    position: absolute;
    left: 0;
    top: 0;
    width: 1920px;
    height: 1014px;
    z-index: 4;
    pointer-events: none;
}
.ring {
    fill: none;
    stroke: #ff3d3d;
    stroke-width: 2.500;
}
.box {
    fill: none;
    stroke: #f525f0;
    stroke-width: 3;
}
.arrow { fill: #f025f0; }
```
